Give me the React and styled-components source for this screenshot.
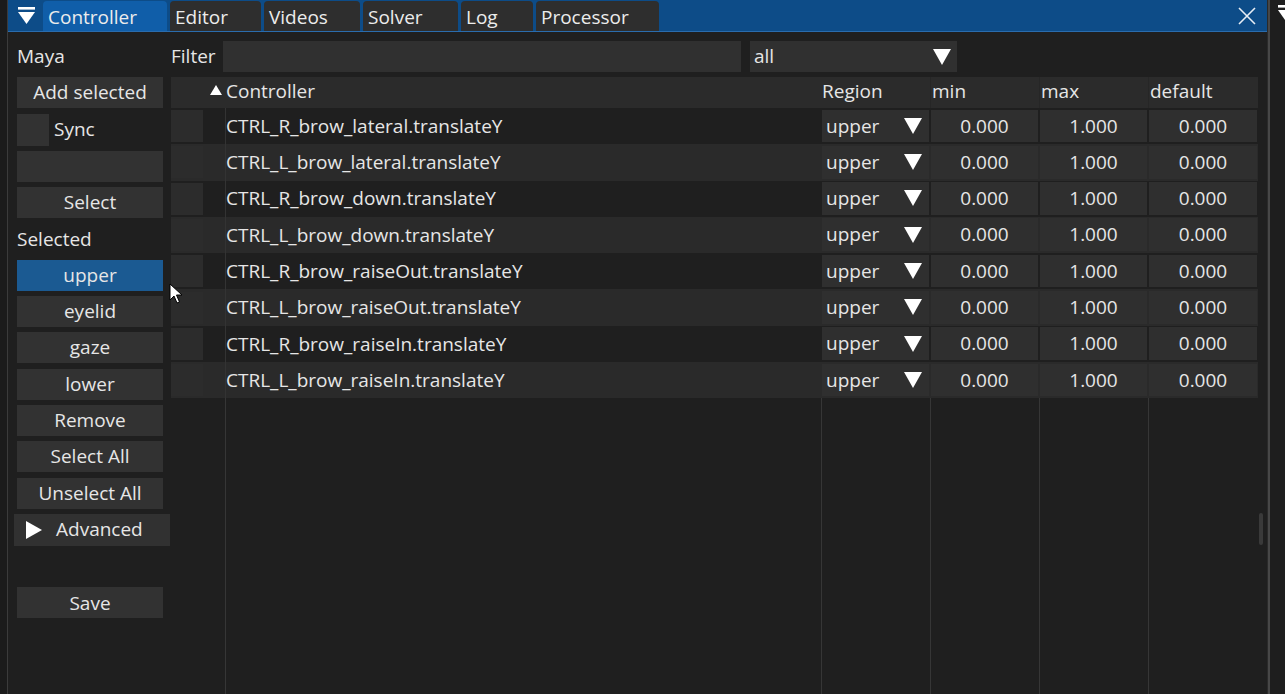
import React from "react";
import styled, { createGlobalStyle } from "styled-components";

const FONT = `"Open Sans", "Noto Sans", "DejaVu Sans", sans-serif`;

const Global = createGlobalStyle`
  html, body { margin: 0; padding: 0; background: #1e1e1e; overflow: hidden; }
  * { box-sizing: border-box; }
`;

const Screen = styled.div`
  position: relative;
  width: 1285px;
  height: 694px;
  display: flex;
  background: #1e1e1e;
  font-family: ${FONT};
  font-size: 19px;
  line-height: 1.2;
  color: #e6e6e6;
  overflow: hidden;
`;

const Gutter = styled.div`
  width: 8px;
  flex: none;
  background: #1b1b1b;
  border-right: 1px solid #3b3b3b;
`;

const Window = styled.div`
  width: 1259px;
  flex: none;
  display: flex;
  flex-direction: column;
  background: #1f1f1f;
`;

const Divider = styled.div`
  width: 3px;
  flex: none;
  background: #474747;
  border-left: 1px solid #2a2a2a;
`;

const SidePanel = styled.div`
  flex: 1;
  background: #1e1e1e;
  padding: 5px 0 0 8px;
`;

const TitleBar = styled.div`
  height: 32px;
  flex: none;
  display: flex;
  align-items: flex-end;
  gap: 3px;
  background: #0d4c88;
  border-bottom: 1px solid #2a6cad;
`;

const MenuButton = styled.div`
  width: 35px;
  height: 31px;
  flex: none;
  display: flex;
  align-items: center;
  justify-content: center;
  padding-left: 2px;
  margin-right: -3px;
`;

const Tab = styled.div`
  width: ${(p) => p.$w}px;
  height: 30px;
  flex: none;
  display: flex;
  align-items: center;
  padding: 2px 0 0 5px;
  border-radius: 4px 4px 0 0;
  background: ${(p) => (p.$active ? "#105ea9" : "#2e2e2e")};
  color: #ececec;
  white-space: nowrap;
`;

const Spacer = styled.div`
  flex: 1;
`;

const CloseButton = styled.div`
  width: 30px;
  height: 31px;
  flex: none;
  display: flex;
  align-items: center;
  justify-content: center;
  margin-right: 5px;
`;

const Body = styled.div`
  flex: 1;
  display: flex;
  gap: 8px;
  padding: 9px 0 0 9px;
  min-height: 0;
`;

const Sidebar = styled.div`
  width: 146px;
  flex: none;
  display: flex;
  flex-direction: column;
  gap: 5.3px;
`;

const Label = styled.div`
  height: 31px;
  display: flex;
  align-items: center;
  white-space: nowrap;
`;

const Button = styled.div`
  height: 31px;
  display: flex;
  align-items: center;
  justify-content: center;
  background: ${(p) => (p.$active ? "#1b5a92" : "#323232")};
  white-space: nowrap;
`;

const CheckRow = styled.div`
  height: 32px;
  display: flex;
  align-items: center;
  gap: 5px;
`;

const CheckBox = styled.div`
  width: 32px;
  height: 32px;
  background: ${(p) => p.$bg || "#323232"};
  flex: none;
`;

const Field = styled.div`
  height: 31px;
  background: #323232;
`;

const Collapser = styled.div`
  height: 32px;
  margin: 0 -7px 0 -3px;
  display: flex;
  align-items: center;
  gap: 14px;
  padding-left: 12px;
  background: #313131;
`;

const Gap = styled.div`
  height: 31px;
`;

const Main = styled.div`
  flex: 1;
  display: flex;
  flex-direction: column;
  gap: 5px;
  min-width: 0;
`;

const FilterRow = styled.div`
  height: 31px;
  display: flex;
  align-items: center;
`;

const FilterLabel = styled.div`
  width: 52px;
  flex: none;
`;

const FilterInput = styled.div`
  width: 518px;
  height: 31px;
  background: #303030;
  margin-right: 9px;
`;

const Combo = styled.div`
  width: 207px;
  height: 31px;
  display: flex;
  align-items: center;
  justify-content: space-between;
  padding: 0 6px 0 4px;
  background: #303030;
`;

const TableWrap = styled.div`
  flex: 1;
  display: flex;
  min-height: 0;
`;

const Table = styled.div`
  width: 1087px;
  flex: none;
  display: flex;
  flex-direction: column;
`;

const COLS = "54px 596px 109px 109px 109px 110px";

const HeaderRow = styled.div`
  height: 31px;
  display: grid;
  grid-template-columns: ${COLS};
  background: #2b2b2b;
`;

const HeaderCell = styled.div`
  display: flex;
  align-items: center;
  justify-content: ${(p) => (p.$end ? "flex-end" : "flex-start")};
  padding: ${(p) => (p.$end ? "0 3px 6px 0" : "0 0 2px 1px")};
  border-left: ${(p) => (p.$sep ? "1px solid #262626" : "none")};
  white-space: nowrap;
`;

const Row = styled.div`
  height: 36.3px;
  display: grid;
  grid-template-columns: ${COLS};
  background: ${(p) => (p.$odd ? "#1f1f1f" : "#2a2a2a")};
`;

const CheckCell = styled.div`
  display: flex;
  align-items: center;
`;

const NameCell = styled.div`
  display: flex;
  align-items: center;
  padding-left: 0;
  border-left: 1px solid #333;
  white-space: nowrap;
`;

const FrameCell = styled.div`
  padding: 1.5px 1px 2px 1px;
  display: flex;
`;

const Frame = styled.div`
  flex: 1;
  display: flex;
  align-items: center;
  justify-content: ${(p) => (p.$center ? "center" : "space-between")};
  padding: ${(p) => (p.$center ? "0" : "0 7px 0 4px")};
  background: #2f2f2f;
  white-space: nowrap;
`;

const Filler = styled.div`
  flex: 1;
  display: grid;
  grid-template-columns: ${COLS};
`;

const FillCol = styled.div`
  border-left: ${(p) => (p.$line ? "1px solid #363636" : "none")};
`;

const ScrollTrack = styled.div`
  width: 6px;
  flex: none;
  margin-left: 1px;
  padding-top: 436px;
`;

const ScrollGrab = styled.div`
  width: 4px;
  height: 32px;
  background: #3a3a3a;
  border-radius: 2px;
`;

const Cursor = styled.svg`
  position: absolute;
  left: 169px;
  top: 283px;
`;

const MenuIcon = () => (
  <svg width="17" height="18" viewBox="0 0 17 18">
    <rect x="0" y="0" width="17" height="2.6" fill="#fff" />
    <polygon points="0,5 17,5 8.5,17" fill="#fff" />
  </svg>
);

const DownArrow = () => (
  <svg width="18" height="16" viewBox="0 0 18 16">
    <polygon points="0,0 18,0 9,16" fill="#fff" />
  </svg>
);

const RightArrow = () => (
  <svg width="16" height="18" viewBox="0 0 16 18">
    <polygon points="0,0 16,9 0,18" fill="#fff" />
  </svg>
);

const UpSmall = () => (
  <svg width="12" height="10" viewBox="0 0 12 10">
    <polygon points="0,10 12,10 6,0" fill="#fff" />
  </svg>
);

const CloseIcon = () => (
  <svg width="18" height="18" viewBox="0 0 18 18">
    <path d="M1 1 L17 17 M17 1 L1 17" stroke="#e8eef5" strokeWidth="1.6" />
  </svg>
);

const tabs = [
  { name: "Controller", w: 124, active: true },
  { name: "Editor", w: 91 },
  { name: "Videos", w: 96 },
  { name: "Solver", w: 95 },
  { name: "Log", w: 72 },
  { name: "Processor", w: 123 },
];

const rows = [
  "CTRL_R_brow_lateral.translateY",
  "CTRL_L_brow_lateral.translateY",
  "CTRL_R_brow_down.translateY",
  "CTRL_L_brow_down.translateY",
  "CTRL_R_brow_raiseOut.translateY",
  "CTRL_L_brow_raiseOut.translateY",
  "CTRL_R_brow_raiseIn.translateY",
  "CTRL_L_brow_raiseIn.translateY",
];

export default function App() {
  return (
    <Screen>
      <Global />
      <Gutter />
      <Window>
        <TitleBar>
          <MenuButton>
            <MenuIcon />
          </MenuButton>
          {tabs.map((t) => (
            <Tab key={t.name} $w={t.w} $active={t.active}>
              {t.name}
            </Tab>
          ))}
          <Spacer />
          <CloseButton>
            <CloseIcon />
          </CloseButton>
        </TitleBar>
        <Body>
          <Sidebar>
            <Label>Maya</Label>
            <Button>Add selected</Button>
            <CheckRow>
              <CheckBox />
              <span>Sync</span>
            </CheckRow>
            <Field />
            <Button>Select</Button>
            <Label>Selected</Label>
            <Button $active>upper</Button>
            <Button>eyelid</Button>
            <Button>gaze</Button>
            <Button>lower</Button>
            <Button>Remove</Button>
            <Button>Select All</Button>
            <Button>Unselect All</Button>
            <Collapser>
              <RightArrow />
              <span>Advanced</span>
            </Collapser>
            <Gap />
            <Button>Save</Button>
          </Sidebar>
          <Main>
            <FilterRow>
              <FilterLabel>Filter</FilterLabel>
              <FilterInput />
              <Combo>
                <span>all</span>
                <DownArrow />
              </Combo>
            </FilterRow>
            <TableWrap>
              <Table>
                <HeaderRow>
                  <HeaderCell $end>
                    <UpSmall />
                  </HeaderCell>
                  <HeaderCell>Controller</HeaderCell>
                  <HeaderCell>Region</HeaderCell>
                  <HeaderCell $sep>min</HeaderCell>
                  <HeaderCell $sep>max</HeaderCell>
                  <HeaderCell $sep>default</HeaderCell>
                </HeaderRow>
                {rows.map((name, i) => (
                  <Row key={name} $odd={i % 2 === 0}>
                    <CheckCell>
                      <CheckBox $bg="#2c2c2c" />
                    </CheckCell>
                    <NameCell>{name}</NameCell>
                    <FrameCell>
                      <Frame>
                        <span>upper</span>
                        <DownArrow />
                      </Frame>
                    </FrameCell>
                    <FrameCell>
                      <Frame $center>0.000</Frame>
                    </FrameCell>
                    <FrameCell>
                      <Frame $center>1.000</Frame>
                    </FrameCell>
                    <FrameCell>
                      <Frame $center>0.000</Frame>
                    </FrameCell>
                  </Row>
                ))}
                <Filler>
                  <FillCol />
                  <FillCol $line />
                  <FillCol $line />
                  <FillCol $line />
                  <FillCol $line />
                  <FillCol $line />
                </Filler>
              </Table>
              <ScrollTrack>
                <ScrollGrab />
              </ScrollTrack>
            </TableWrap>
          </Main>
        </Body>
      </Window>
      <Divider />
      <SidePanel>
        <MenuIcon />
      </SidePanel>
      <Cursor width="14" height="22" viewBox="0 0 14 22">
        <path d="M1 1 L1 17 L5 13 L8 20 L10.5 19 L7.5 12 L13 12 Z" fill="#fff" stroke="#000" strokeWidth="1" />
      </Cursor>
    </Screen>
  );
}
